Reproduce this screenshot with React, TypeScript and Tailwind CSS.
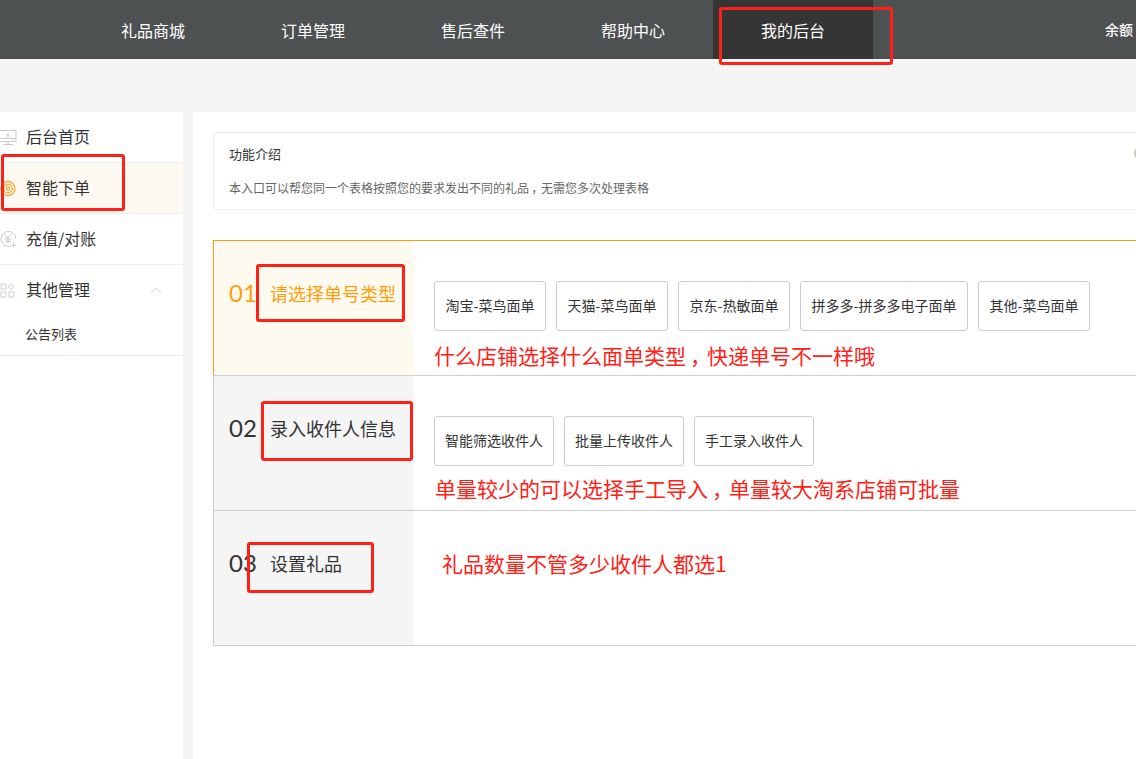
import React from "react";

const font = { fontFamily: '"Noto Sans CJK SC", "Noto Sans", sans-serif' };

function Opt({ label, w }: { label: string; w: string }) {
  return (
    <div className={`h-[50px] ${w} shrink-0 flex items-center justify-center pb-[2px] border border-[#cccccc] rounded-[3px] text-[14px] text-[#333]`}>
      {label}
    </div>
  );
}

function RedBox({ cls }: { cls: string }) {
  return <div className={`absolute border-[3px] border-[#ff2116] rounded-[3px] pointer-events-none ${cls}`} />;
}

function Comma() {
  return <span className="inline-block w-[1em] text-center [font-feature-settings:'palt']">，</span>;
}

function Step({ num, title, active, note, noteCls, children }: { num: string; title: string; active?: boolean; note: React.ReactNode; noteCls: string; children?: React.ReactNode }) {
  return (
    <div className={`flex h-[135px] border-l border-t ${active ? "border-[#ff9d0a]" : "border-[#cfcfcf]"}`}>
      <div className={`w-[200px] shrink-0 flex items-center pl-[15px] pb-[30px] ${active ? "bg-[#fffaf0] text-[#ff9d0a]" : "bg-[#f5f5f5] text-[#333]"}`}>
        <span className="w-[41px] text-[24px] leading-none" style={{ fontFamily: "Lato, sans-serif" }}>{num}</span>
        <span className="text-[18px]">{title}</span>
      </div>
      <div className="flex-1 min-w-0 pl-[20px]">
        {children ? <div className="flex gap-[10px] pt-[40px]">{children}</div> : null}
        <div className={`text-[21px] leading-[28px] text-[#ff2116] whitespace-nowrap ${noteCls}`}>{note}</div>
      </div>
    </div>
  );
}

function SideRow({ icon, label, active }: { icon: React.ReactNode; label: string; active?: boolean }) {
  return (
    <div className={`h-[51px] flex items-center border-b border-[#eeeeee] text-[16px] text-[#333] ${active ? "bg-[#fdf9f0]" : ""}`}>
      <span className="w-[26px] shrink-0 flex items-center">{icon}</span>
      <span className="relative -top-px">{label}</span>
    </div>
  );
}

export default function App() {
  return (
    <div className="relative w-[1136px] h-[759px] overflow-hidden bg-[#f4f4f4]" style={font}>
      <header className="h-[59px] bg-[#4d5152] flex pl-[73px] text-white text-[16px] relative">
        {["礼品商城", "订单管理", "售后查件", "帮助中心", "我的后台"].map((t, i) => (
          <div key={t} className={`w-[160px] flex items-center justify-center ${i === 4 ? "bg-[#353535]" : ""}`}>{t}</div>
        ))}
        <div className="flex-1 flex items-center justify-end text-[14px] font-medium pr-[3px]">余额</div>
      </header>

      <div className="flex mt-[53px] h-[647px] gap-[10px]">
        <aside className="w-[183px] shrink-0 bg-white h-full">
          <SideRow
            label="后台首页"
            icon={
              <svg width="17" height="17" viewBox="0 0 17 17" fill="none" stroke="#c8c8c8" strokeWidth="1">
                <rect x="-1" y="1.5" width="17" height="11" />
                <path d="M-1 9.5h17M3 15.5h10M8 12.5v3M6 7h4M8 4v3" />
              </svg>
            }
          />
          <SideRow
            active
            label="智能下单"
            icon={
              <svg width="17" height="17" viewBox="0 0 17 17" fill="none" stroke="#f6a93b" strokeWidth="1.3">
                <circle cx="8" cy="8.5" r="7" />
                <circle cx="8" cy="8.5" r="4.4" />
                <circle cx="8" cy="8.5" r="1.8" />
              </svg>
            }
          />
          <SideRow
            label="充值/对账"
            icon={
              <svg width="17" height="17" viewBox="0 0 17 17" fill="none" stroke="#c8c8c8" strokeWidth="1">
                <path d="M11 15A7.5 7.5 0 1 1 16 8" />
                <path d="M5 3.5l3 3.5 3-3.5M8 7v6M5 8h6M5 10.5h6M13.5 11.5v5M11 14h5" />
              </svg>
            }
          />
          <div className="h-[91px] border-b border-[#eeeeee]">
            <div className="h-[50px] flex items-center text-[16px] text-[#333]">
              <span className="w-[26px] shrink-0">
                <svg width="15" height="15" viewBox="0 0 15 15" fill="none" stroke="#d0d0d0" strokeWidth="1">
                  <rect x="1" y="1" width="5" height="5" />
                  <path d="M11 .8L14 3.5 11 6.2 8 3.5z" />
                  <rect x="1" y="9" width="5" height="5" />
                  <rect x="9" y="9" width="5" height="5" />
                </svg>
              </span>
              <span className="relative -top-px">其他管理</span>
              <svg className="ml-[60px]" width="12" height="7" viewBox="0 0 12 7" fill="none" stroke="#d5d5d5" strokeWidth="1">
                <path d="M.5 6.5L6 1l5.5 5.5" />
              </svg>
            </div>
            <div className="pl-[25px] text-[13px] leading-[18px] text-[#333] pt-[10px]">公告列表</div>
          </div>
        </aside>

        <main className="flex-1 min-w-0 bg-white pt-[20px] pl-[20px] h-full">
          <div className="h-[78px] w-[960px] border border-[#eeeeee] rounded-[3px] pl-[15px] relative">
            <div className="text-[13px] leading-[18px] text-[#333] pt-[12px]">功能介绍</div>
            <div className="text-[12px] leading-[18px] text-[#666] mt-[16px]">
              本入口可以帮您同一个表格按照您的要求发出不同的礼品<Comma />无需您多次处理表格
            </div>
            <div className="absolute left-[920px] top-[13px] w-[14px] h-[14px] rounded-full bg-[#cfc6b4]" />
          </div>

          <div className="mt-[30px] w-[960px] border-b border-[#cfcfcf]">
            <Step
              num="01"
              title="请选择单号类型"
              active
              note={<>什么店铺选择什么面单类型<Comma />快递单号不一样哦</>}
              noteCls="mt-[10px]"
            >
              <Opt label="淘宝-菜鸟面单" w="w-[112px]" />
              <Opt label="天猫-菜鸟面单" w="w-[112px]" />
              <Opt label="京东-热敏面单" w="w-[112px]" />
              <Opt label="拼多多-拼多多电子面单" w="w-[168px]" />
              <Opt label="其他-菜鸟面单" w="w-[112px]" />
            </Step>
            <Step
              num="02"
              title="录入收件人信息"
              note={<>单量较少的可以选择手工导入<Comma />单量较大淘系店铺可批量</>}
              noteCls="mt-[8px] ml-[1px]"
            >
              <Opt label="智能筛选收件人" w="w-[120px]" />
              <Opt label="批量上传收件人" w="w-[120px]" />
              <Opt label="手工录入收件人" w="w-[120px]" />
            </Step>
            <Step num="03" title="设置礼品" note="礼品数量不管多少收件人都选1" noteCls="pt-[38px] ml-[8px]" />
          </div>
        </main>
      </div>

      <RedBox cls="left-[719px] top-[7px] w-[174px] h-[58px]" />
      <RedBox cls="left-[1px] top-[154px] w-[124px] h-[57px]" />
      <RedBox cls="left-[256px] top-[264px] w-[149px] h-[58px]" />
      <RedBox cls="left-[261px] top-[401px] w-[152px] h-[60px]" />
      <RedBox cls="left-[247px] top-[542px] w-[127px] h-[51px]" />
    </div>
  );
}
